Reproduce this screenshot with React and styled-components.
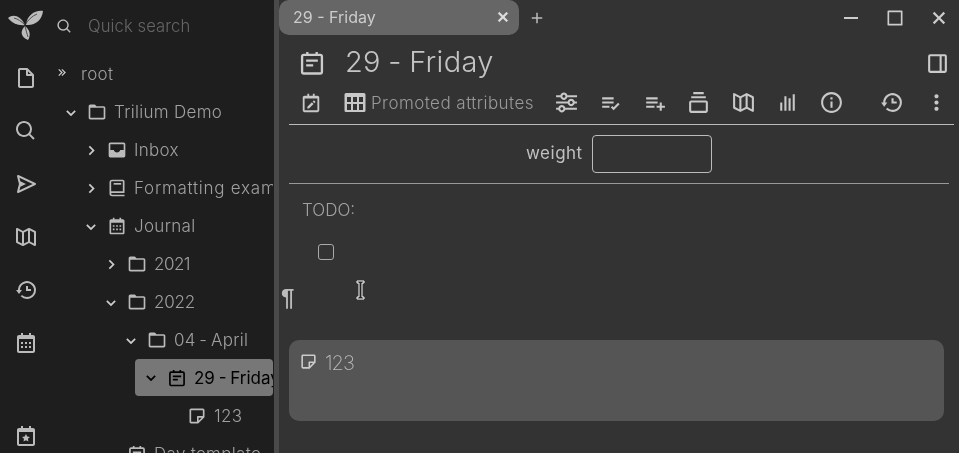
import React from "react";
import styled, { createGlobalStyle, css } from "styled-components";
import {
  BiFileBlank, BiSearch, BiSend, BiMapAlt, BiHistory, BiCalendar, BiCalendarStar, BiCalendarEdit,
  BiSliderAlt, BiListCheck, BiListPlus, BiCollection, BiBarChart, BiInfoCircle, BiDotsVerticalRounded,
  BiDockRight, BiFolder, BiChevronDown, BiChevronRight, BiChevronsRight, BiBook, BiNote, BiPlus, BiX, BiMinus, BiSquare,
} from "react-icons/bi";
import { BiSolidInbox } from "react-icons/bi";

const Global = createGlobalStyle`
  html, body { margin: 0; padding: 0; height: 100%; overflow: hidden; background: #333; }
  * { box-sizing: border-box; }
`;

const grayText = css`will-change: transform;`;

const Page = styled.div`
  width: 959px; height: 453px; display: flex; overflow: hidden; position: relative;
  font-family: Inter, "Noto Sans", sans-serif; font-weight: 300; color: #bbb; background: #333;
`;
const Launcher = styled.nav`
  width: 51px; flex: none; background: #1e1e1e; display: flex; flex-direction: column; align-items: center;
`;
const LauncherBtn = styled.div`
  width: 50px; height: 53px; display: flex; align-items: center; justify-content: center; font-size: 24px; color: #bbb;
  flex: none; margin-left: 1px;
`;
const LauncherBottom = styled(LauncherBtn)`margin-top: auto; height: 34px;`;
const Logo = styled.svg`width: 52px; height: 51px; flex: none; display: block;`;
const Tree = styled.aside`
  width: 222px; flex: none; background: #1e1e1e; display: flex; flex-direction: column; overflow: hidden;
`;
const Gap = styled.div`width: 1px; background: #1e1e1e; flex: none;`;
const Splitter = styled.div`width: 5px; background: #4a4a4a; flex: none;`;
const Search = styled.div`
  height: 50px; display: flex; align-items: center; padding-left: 5px; gap: 15px; color: #666; font-size: 16.6px; flex: none;
  letter-spacing: 0.1px; padding-top: 2px;
  svg { color: #bbb; font-size: 17px; }
  span { ${grayText} }
`;
const Row = styled.div`
  height: 38px; flex: none; display: flex; align-items: center; white-space: nowrap; font-size: 17px; color: #a0a0a0;
  letter-spacing: ${p => p.$ls ?? 0.3}px;
  margin-left: ${p => p.$indent}px;
  span.t { ${grayText} }
`;
const SelectedRow = styled(Row)`
  background: #777; color: #000; font-weight: 400; border-radius: 4px; height: 37px;
  padding-left: 6px; margin-bottom: 1px; word-spacing: -1px; letter-spacing: 0;
`;
const DatedRow = styled(Row)`word-spacing: -1.5px;`;
const Chevron = styled.span`width: 20px; flex: none; display: flex; align-items: center; justify-content: center; font-size: 21px; color: ${p => p.$dark ? "#000" : "#ccc"};`;
const NoChevron = styled.span`width: 20px; flex: none;`;
const Icon = styled.span`
  width: 20px; flex: none; display: flex; align-items: center; justify-content: center; font-size: 20px;
  margin-left: 6px; margin-right: 7px; color: ${p => p.$dark ? "#000" : "#bbb"};
`;
const RootChevron = styled.span`font-size: 15px; width: 30px; padding-left: 4px; display: flex; color: #ccc; margin-top: -3px;`;
const CalSvg = styled.svg`width: 1em; height: 1em; display: block;`;

const Main = styled.main`flex: 1; min-width: 0; display: flex; flex-direction: column;`;
const TabBar = styled.div`height: 35px; flex: none; display: flex; align-items: center;`;
const Tab = styled.div`
  width: 240px; height: 35px; background: #666; border-radius: 10px; margin-top: -1px;
  display: flex; align-items: center; justify-content: space-between; padding: 0 6px 0 14px; color: #ccc; font-size: 16px; font-weight: 400;
  span { ${grayText} }
  svg { font-size: 20px; color: #ddd; stroke: #ddd; stroke-width: 1; }
`;
const NewTab = styled.div`margin-left: 9px; font-size: 18px; display: flex; color: #bbb;`;
const WinBtns = styled.div`margin-left: auto; margin-right: -2px; display: flex; align-items: center;`;
const WinBtn = styled.div`width: 44px; height: 35px; display: flex; align-items: center; justify-content: center; color: #ccc; `;
const TitleRow = styled.div`
  height: 55px; flex: none; display: flex; align-items: center; padding-left: 20px; padding-right: 10px;
`;
const TitleIcon = styled.span`font-size: 28px; display: flex; color: #ccc; margin-left: -1px;`;
const Title = styled.div`margin-left: 19px; font-size: 29px; font-weight: 300; color: #c4c4c4; letter-spacing: 0.3px; word-spacing: -1px; flex: 1; margin-top: -2px; ${grayText}`;
const Dock = styled.span`font-size: 25px; display: flex; color: #ccc; margin-top: 2px; margin-right: -1px;`;
const Ribbon = styled.div`
  height: 35px; flex: none; display: flex; align-items: center; margin: 0 5px 0 10px; border-bottom: 1px solid #bbb; padding-bottom: 9px;
`;
const RibbonIcon = styled.span`
  width: 44.25px; display: flex; justify-content: center; font-size: 25px; color: #c8c8c8; flex: none;
  margin-left: ${p => p.$ml || 0}px;
`;
const EditIcon = styled(RibbonIcon)`width: 44px; font-size: 22px;`;
const RibbonTab = styled.div`display: flex; align-items: center; gap: 5px; font-size: 17px; color: #999; width: 211px; flex:none; padding-left: 11px; white-space: nowrap; letter-spacing: 0.45px;
  span { ${grayText} }
`;
const TableSvg = styled.svg`width: 22px; height: 22px; flex: none;`;
const AttrRow = styled.div`
  height: 59px; flex: none; margin: 0 10px; border-bottom: 1px solid #999; display: flex; align-items: center; justify-content: center;
  gap: 10px; font-size: 17px; font-weight: 400; color: #c0c0c0; padding-bottom: 1px; letter-spacing: 0.5px;
  span { ${grayText} margin-top: -2px; }
`;
const AttrInput = styled.div`width: 120px; height: 38px; border: 1px solid #bbb; border-radius: 4px; background: #333;`;
const Editor = styled.div`padding: 17px 0 0 23px; height: 156px; flex: none; position: relative;`;
const Todo = styled.div`font-size: 17px; color: #a0a0a0; line-height: 18px; ${grayText}`;
const Check = styled.div`width: 16px; height: 16px; border: 1px solid #aaa; border-radius: 3px; margin: 25px 0 0 16px;`;
const Pilcrow = styled.div`position: absolute; left: 2px; top: 100px; font-size: 24px; font-family: "Liberation Sans", sans-serif; font-weight: 700; color: #bbb; ${grayText}`;
const Cursor = styled.svg`position: absolute; left: 77px; top: 96px; width: 9px; height: 20px;`;
const Card = styled.div`
  margin: 0 15px 0 10px; height: 81px; background: #555; border-radius: 10px; display: flex; align-items: flex-start; padding: 11px 0 0 10px; gap: 7px;
  font-size: 20px; font-weight: 200; color: #bbb; letter-spacing: -1px;
  span { ${grayText} }
  svg { font-size: 19px; color: #ccc; margin-top: 1px; }
`;

const Tri = () => (
  <Logo viewBox="0 0 52 51">
    <path fill="#bbb" d="M8 18C13 14 20 15 25 25C18 26 12 23 8 18z" />
    <path fill="#bbb" d="M43 11C42 20 35 26 26 25C27 15 35 10 43 11z" />
    <path fill="#bbb" d="M25 26C21 30 19 36 28 40C31 35 30 30 25 26z" />
    <path fill="none" stroke="#333" strokeWidth="0.8" d="M14 18C18 19 21 21 25 25M37 14C32 16 28 20 25 25M25 26C26 30 27 34 28 37" />
  </Logo>
);

const CalendarEvent = () => (
  <CalSvg viewBox="0 0 24 24" fill="none" stroke="currentColor" strokeWidth="2">
    <rect x="3.5" y="5" width="17" height="16" rx="1.5" />
    <path d="M8 2.5v3M16 2.5v3M7 10h10M7 14h6" />
  </CalSvg>
);

const TableIcon = () => (
  <TableSvg viewBox="0 0 22 22">
    <path fill="#c8c8c8" fillRule="evenodd" d="M2 1h18a1.500 1.500 0 0 1 1.500 1.500v16A1.500 1.500 0 0 1 20 20H2a1.500 1.500 0 0 1-1.500-1.500v-16A1.500 1.500 0 0 1 2 1zM3 5v5h4V5zM9 5v5h4V5zM15 5v5h4V5zM3 12v6h4v-6zM9 12v6h4v-6zM15 12v6h4v-6z" />
  </TableSvg>
);

export default function App() {
  return (
    <Page>
      <Global />
      <Launcher>
        <Tri />
        <LauncherBtn><BiFileBlank /></LauncherBtn>
        <LauncherBtn><BiSearch /></LauncherBtn>
        <LauncherBtn><BiSend /></LauncherBtn>
        <LauncherBtn><BiMapAlt /></LauncherBtn>
        <LauncherBtn><BiHistory /></LauncherBtn>
        <LauncherBtn><BiCalendar /></LauncherBtn>
        <LauncherBottom><BiCalendarStar /></LauncherBottom>
      </Launcher>
      <Tree>
        <Search><BiSearch /><span>Quick search</span></Search>
        <Row $indent={0} style={{ marginTop: 5 }}><RootChevron><BiChevronsRight /></RootChevron><span className="t">root</span></Row>
        <Row $indent={10}><Chevron><BiChevronDown /></Chevron><Icon><BiFolder /></Icon><span className="t">Trilium Demo</span></Row>
        <Row $indent={30}><Chevron><BiChevronRight /></Chevron><Icon><BiSolidInbox /></Icon><span className="t">Inbox</span></Row>
        <Row $indent={30} $ls={0.75}><Chevron><BiChevronRight /></Chevron><Icon><BiBook /></Icon><span className="t">Formatting examples</span></Row>
        <Row $indent={30}><Chevron><BiChevronDown /></Chevron><Icon><BiCalendar /></Icon><span className="t">Journal</span></Row>
        <Row $indent={50} $ls={-0.5}><Chevron><BiChevronRight /></Chevron><Icon><BiFolder /></Icon><span className="t">2021</span></Row>
        <Row $indent={50} $ls={-0.2}><Chevron><BiChevronDown /></Chevron><Icon><BiFolder /></Icon><span className="t">2022</span></Row>
        <DatedRow $indent={70}><Chevron><BiChevronDown /></Chevron><Icon><BiFolder /></Icon><span className="t">04 - April</span></DatedRow>
        <SelectedRow $indent={84}><Chevron $dark><BiChevronDown /></Chevron><Icon $dark><CalendarEvent /></Icon><span className="t">29 - Friday</span></SelectedRow>
        <Row $indent={110}><NoChevron /><Icon><BiNote /></Icon><span className="t">123</span></Row>
        <Row $indent={70}><Icon><CalendarEvent /></Icon><span className="t">Day template</span></Row>
      </Tree>
      <Gap />
      <Splitter />
      <Main>
        <TabBar>
          <Tab><span>29 - Friday</span><BiX /></Tab>
          <NewTab><BiPlus /></NewTab>
          <WinBtns>
            <WinBtn><BiMinus size={24} /></WinBtn>
            <WinBtn><BiSquare size={20} /></WinBtn>
            <WinBtn><BiX size={26} /></WinBtn>
          </WinBtns>
        </TabBar>
        <TitleRow>
          <TitleIcon><CalendarEvent /></TitleIcon>
          <Title>29 - Friday</Title>
          <Dock><BiDockRight /></Dock>
        </TitleRow>
        <Ribbon>
          <EditIcon><BiCalendarEdit /></EditIcon>
          <RibbonTab><TableIcon /><span>Promoted attributes</span></RibbonTab>
          <RibbonIcon><BiSliderAlt /></RibbonIcon>
          <RibbonIcon><BiListCheck /></RibbonIcon>
          <RibbonIcon><BiListPlus /></RibbonIcon>
          <RibbonIcon><BiCollection /></RibbonIcon>
          <RibbonIcon><BiMapAlt /></RibbonIcon>
          <RibbonIcon><BiBarChart /></RibbonIcon>
          <RibbonIcon><BiInfoCircle /></RibbonIcon>
          <RibbonIcon $ml={16}><BiHistory /></RibbonIcon>
          <RibbonIcon><BiDotsVerticalRounded /></RibbonIcon>
        </Ribbon>
        <AttrRow><span>weight</span><AttrInput /></AttrRow>
        <Editor>
          <Todo>TODO:</Todo>
          <Check />
          <Pilcrow>¶</Pilcrow>
          <Cursor viewBox="0 0 9 20">
            <path d="M1 1h7v2H6v14h2v2H1v-2h2V3H1z" fill="#222" stroke="#fff" strokeWidth="1" />
          </Cursor>
        </Editor>
        <Card><BiNote /><span>123</span></Card>
      </Main>
    </Page>
  );
}
